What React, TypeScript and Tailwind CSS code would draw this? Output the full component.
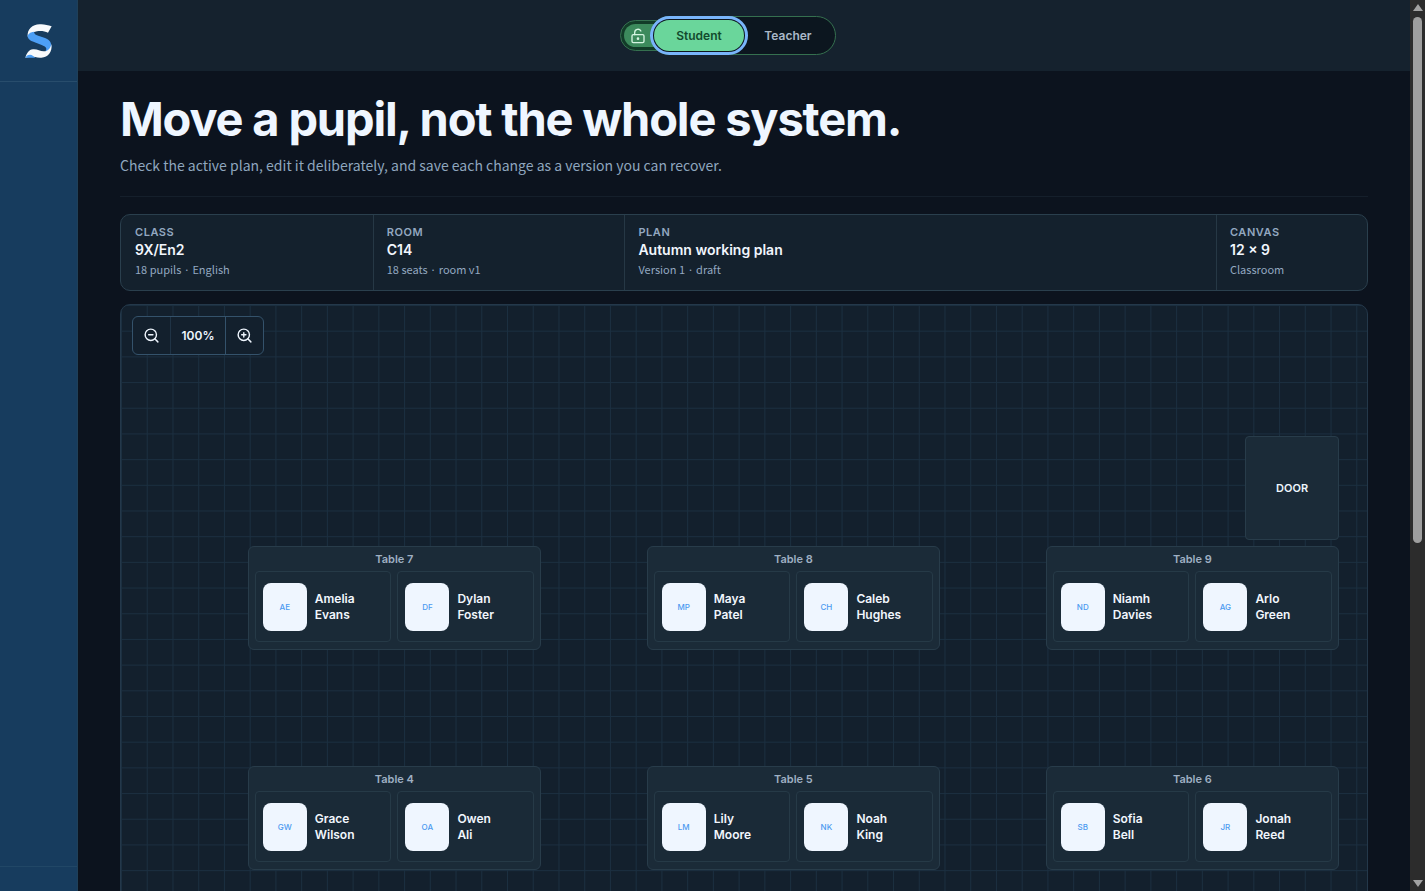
import { LockKeyholeOpen, ZoomIn, ZoomOut } from "lucide-react";
import { useState } from "react";

type Pupil = { first: string; last: string };
type ClassTable = { name: string; place: string; pupils: Pupil[] };

const DETAILS = [
  { label: "Class", value: "9X/En2", note: "18 pupils · English" },
  { label: "Room", value: "C14", note: "18 seats · room v1" },
  { label: "Plan", value: "Autumn working plan", note: "Version 1 · draft" },
  { label: "Canvas", value: "12 × 9", note: "Classroom" },
];

const TABLES: ClassTable[] = [
  {
    name: "Table 7",
    place: "col-start-2 row-start-3",
    pupils: [{ first: "Amelia", last: "Evans" }, { first: "Dylan", last: "Foster" }],
  },
  {
    name: "Table 8",
    place: "col-start-6 row-start-3",
    pupils: [{ first: "Maya", last: "Patel" }, { first: "Caleb", last: "Hughes" }],
  },
  {
    name: "Table 9",
    place: "col-start-10 row-start-3",
    pupils: [{ first: "Niamh", last: "Davies" }, { first: "Arlo", last: "Green" }],
  },
  {
    name: "Table 4",
    place: "col-start-2 row-start-5",
    pupils: [{ first: "Grace", last: "Wilson" }, { first: "Owen", last: "Ali" }],
  },
  {
    name: "Table 5",
    place: "col-start-6 row-start-5",
    pupils: [{ first: "Lily", last: "Moore" }, { first: "Noah", last: "King" }],
  },
  {
    name: "Table 6",
    place: "col-start-10 row-start-5",
    pupils: [{ first: "Sofia", last: "Bell" }, { first: "Jonah", last: "Reed" }],
  },
];

function Logo() {
  return (
    <svg viewBox="0 0 84 102" className="h-[34px] w-7" aria-hidden="true">
      <path d="M8 38C6 16 22 1 44 1C58 0 68 4 80 7L69 26C60 22 48 20 36 22C24 24 14 29 8 38Z" fill="#f8fafc" />
      <path d="M8 34C12 27 18 24 27 23C27 30 33 33 42 36L60 42C74 47 80 56 79 70C76 80 69 83 61 82C68 74 63 68 50 63L29 55C14 50 7 44 8 34Z" fill="#4d9ff5" />
      <path d="M79 60C83 82 70 100 49 101C34 102 26 97 16 98L1 101C5 88 11 77 24 76C37 75 45 82 56 82C68 82 76 75 79 60Z" fill="#f8fafc" />
      <path d="M1 101C4 95 8 92 15 92C22 92 25 97 31 101Z" fill="#4d9ff5" />
    </svg>
  );
}

function Sidebar() {
  return (
    <aside className="flex w-[78px] shrink-0 flex-col justify-between border-r border-[#1f4059] bg-[#173c5e]">
      <a href="#home" aria-label="Home" className="flex h-[82px] items-center justify-center border-b border-[#284d6c]">
        <Logo />
      </a>
      <div className="h-[25px] border-t border-[#214766]" />
    </aside>
  );
}

function ModeSwitch() {
  const [mode, setMode] = useState("student");

  return (
    <div className="flex items-center font-[Inter,sans-serif] text-xs font-semibold">
      <button
        aria-label="Unlocked"
        className="-mr-8 flex h-[31px] w-[62px] items-center rounded-full border border-[#35704f] bg-[#123c28] p-[3px]"
      >
        <span className="flex h-full w-full items-center rounded-full bg-[#3c8a5c] pl-1.5 text-[#d5f5e1]">
          <LockKeyholeOpen size={16} strokeWidth={2} />
        </span>
      </button>
      <div className="z-10 flex h-[39px] items-center rounded-full border border-[#35704f] bg-[#0c161f] p-[3px]">
        <button
          aria-pressed={mode === "student"}
          onClick={() => setMode("student")}
          className="h-[31px] w-[90px] rounded-full bg-[#6ad69b] text-[#124a2d] outline-[3px] outline-offset-1 outline-[#79b5fb]"
        >
          Student
        </button>
        <button
          aria-pressed={mode === "teacher"}
          onClick={() => setMode("teacher")}
          className="h-[31px] w-[88px] rounded-full text-[#a9b8c8]"
        >
          Teacher
        </button>
      </div>
    </div>
  );
}

function PlanDetails() {
  return (
    <dl className="grid grid-cols-[20fr_20fr_47fr_12fr] overflow-hidden rounded-[10px] border border-[#2a3f4d] bg-[#14212d]">
      {DETAILS.map((d) => (
        <div key={d.label} className="flex h-[75px] flex-col border-l border-[#263845] px-[13px] pt-[9px] first:border-l-0 first:pl-3.5">
          <dt className="font-[Inter,sans-serif] text-[11px] leading-4 font-semibold tracking-wider text-[#93a8c0] uppercase">
            {d.label}
          </dt>
          <dd className="font-[Inter,sans-serif] text-sm leading-5 font-semibold text-[#f1f6fd]">{d.value}</dd>
          <dd className="font-['Noto_Sans_CJK_KR',sans-serif] text-[11px] leading-[18px] text-[#93a8c0]">{d.note}</dd>
        </div>
      ))}
    </dl>
  );
}

function ZoomControls() {
  const [zoom, setZoom] = useState(100);

  return (
    <div className="absolute top-[11px] left-[11px] flex h-[39px] items-stretch overflow-hidden rounded-md border border-[#34526b] bg-[#13202d] text-[#eef5fd]">
      <button aria-label="Zoom out" onClick={() => setZoom(zoom - 10)} className="flex w-[37px] items-center justify-center">
        <ZoomOut size={17} />
      </button>
      <button
        onClick={() => setZoom(100)}
        className="w-14 border-x border-r-[#34526b] border-l-[#1f3345] font-[Inter,sans-serif] text-xs font-semibold"
      >
        {zoom}%
      </button>
      <button aria-label="Zoom in" onClick={() => setZoom(zoom + 10)} className="flex w-[37px] items-center justify-center">
        <ZoomIn size={17} />
      </button>
    </div>
  );
}

function Seat({ pupil }: { pupil: Pupil }) {
  return (
    <button className="flex min-w-0 flex-1 items-center gap-2 rounded border border-[#263a47] bg-[#1a2a37] px-[7px] text-left">
      <span className="flex h-12 w-11 shrink-0 items-center justify-center rounded-lg bg-[#eff6ff] text-[8px] font-medium text-[#4c9af0]">
        {pupil.first[0]}
        {pupil.last[0]}
      </span>
      <span className="text-xs leading-4 font-semibold text-[#f1f6fd]">
        {pupil.first}
        <br />
        {pupil.last}
      </span>
    </button>
  );
}

function TableCard({ table }: { table: ClassTable }) {
  return (
    <section className={`${table.place} col-span-3 flex flex-col rounded-md border border-[#283c4a] bg-[#1b2b38] px-1.5 pb-[7px]`}>
      <h2 className="h-6 text-center text-[11px] leading-6 font-semibold text-[#9fb0c3]">{table.name}</h2>
      <div className="flex flex-1 gap-1.5">
        {table.pupils.map((p) => (
          <Seat key={p.first} pupil={p} />
        ))}
      </div>
    </section>
  );
}

function RoomCanvas() {
  return (
    <div className="relative mt-[13px] rounded-[10px] border border-[#24384a] bg-[#13202d] bg-[linear-gradient(to_right,#1b2f40_1px,transparent_1px),linear-gradient(to_bottom,#1b2f40_1px,transparent_1px)] bg-size-[calc(100%/48.4)_calc(100%/40)] pt-[21px] pr-7 pb-[23px] pl-[27px]">
      <ZoomControls />
      <div className="grid grid-cols-12 grid-rows-[repeat(9,104px)] gap-1.5 font-[Inter,sans-serif]">
        <div className="col-start-12 row-start-2 flex items-center justify-center rounded border border-[#283c4a] bg-[#1b2b38] text-[11px] font-semibold text-[#eef5fd]">
          DOOR
        </div>
        {TABLES.map((t) => (
          <TableCard key={t.name} table={t} />
        ))}
      </div>
    </div>
  );
}

function ScrollTrack() {
  return (
    <div className="flex w-[15px] shrink-0 flex-col items-center justify-between bg-[#2c2c2c] py-1" aria-hidden="true">
      <div className="flex h-full flex-col items-center gap-1.5">
        <div className="border-x-[5px] border-b-[7px] border-x-transparent border-b-[#a3a3a3]" />
        <div className="h-[60%] w-[9px] rounded-full bg-[#9f9f9f]" />
      </div>
      <div className="border-x-[5px] border-t-[7px] border-x-transparent border-t-[#a3a3a3]" />
    </div>
  );
}

export default function App() {
  return (
    <div className="flex h-screen overflow-hidden bg-[#0c131e]">
      <Sidebar />
      <div className="flex min-w-0 flex-1 flex-col">
        <header className="flex h-[71px] shrink-0 items-center justify-center bg-[#15222e] pr-8">
          <ModeSwitch />
        </header>
        <main className="min-h-0 flex-1 overflow-hidden px-[42px]">
          <div className="mb-[17px] border-b border-[#151f2b] pt-5 pb-[19px]">
            <h1 className="font-[Inter,sans-serif] text-[47px] leading-[56px] font-bold tracking-tight text-[#eff6ff]">
              Move a pupil, not the whole system.
            </h1>
            <p className="pt-1.5 font-['Noto_Sans_CJK_KR',sans-serif] text-sm leading-6 text-[#8fa6be]">
              Check the active plan, edit it deliberately, and save each change as a version you can recover.
            </p>
          </div>
          <PlanDetails />
          <RoomCanvas />
        </main>
      </div>
      <ScrollTrack />
    </div>
  );
}
